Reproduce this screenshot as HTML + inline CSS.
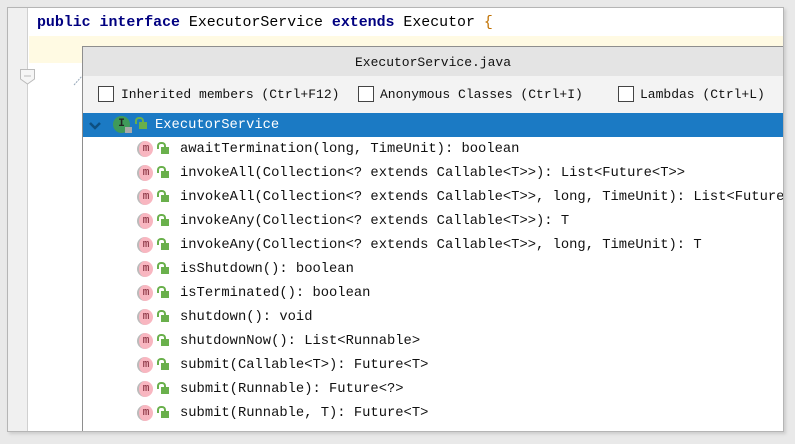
<!DOCTYPE html>
<html><head><style>
*{margin:0;padding:0;box-sizing:border-box}
body{width:795px;height:444px;background:#e9e9e9;position:relative;overflow:hidden;font-family:"Liberation Mono",monospace}
#frame{position:absolute;left:7px;top:7px;width:777px;height:425px;border:1px solid #b5b5b5;background:#fff;overflow:hidden;box-shadow:2px 2px 3px #ccc}
#gut{position:absolute;left:0;top:0;width:20px;height:100%;background:#f0f0f0;border-right:1px solid #d0d0d0}
#code{position:absolute;left:29px;top:5px;font-size:14.9px;line-height:20px;color:#000;white-space:pre}
.kw{color:#000080;font-weight:bold}
#hl{position:absolute;left:21px;top:28px;right:0;height:27px;background:#fffae3}
#pop{position:absolute;left:74px;top:38px;right:0;bottom:0;border-left:1px solid #8e8e8e;border-top:1px solid #8e8e8e;background:#fff}
#title{height:29px;background:#e4e4e4;text-align:center;font-size:13px;line-height:31px;color:#111}
#opts{height:37px;background:#f3f3f3;position:relative;font-size:13px;color:#111}
.cb{position:absolute;top:10px;width:16px;height:16px;border:1px solid #444;background:#fff}
.ol{position:absolute;top:11px;line-height:16px;white-space:pre}
#sel{height:24px;background:#1b7ac4;position:relative;color:#fff;font-size:13.8px;line-height:24px}
.row{height:24px;position:relative;font-size:13.8px;line-height:24px;white-space:pre;color:#111}
.m{position:absolute;left:54px;top:4px;width:16px;height:16px;border-radius:50%;background:#f8b6c0;color:#7a2030;font-size:11px;line-height:16px;text-align:center;border-left:2px solid #bbb}
.lk{position:absolute;left:78px;top:10px;width:8px;height:7px;background:#6ab04c}
.lk:before{content:"";position:absolute;left:-4px;top:-5px;width:5px;height:5px;border:2px solid #6ab04c;border-bottom:none;border-radius:4px 4px 0 0}
.t{position:absolute;left:97px;top:1px}
</style></head><body>
<div id="frame">
<div id="gut"></div>
<div id="hl"></div>
<div id="code"><span class="kw">public interface</span> ExecutorService <span class="kw">extends</span> Executor <span style="color:#c07000">{</span></div>
<svg style="position:absolute;left:12px;top:61px" width="15" height="16"><path d="M0.5 0.5H14.5V10L7.5 15L0.5 10Z" fill="#f5f5f5" stroke="#bbb"/><path d="M4 7H11" stroke="#bbb"/></svg>
<svg style="position:absolute;left:65px;top:66px" width="10" height="12"><path d="M1 11L9 2" stroke="#9ab" stroke-dasharray="2,1"/></svg>
<div id="pop">
<div id="title">ExecutorService.java</div>
<div id="opts">
<div class="cb" style="left:15px"></div><div class="ol" style="left:38px">Inherited members (Ctrl+F12)</div>
<div class="cb" style="left:275px"></div><div class="ol" style="left:297px">Anonymous Classes (Ctrl+I)</div>
<div class="cb" style="left:535px"></div><div class="ol" style="left:557px">Lambdas (Ctrl+L)</div>
</div>
<div id="sel"><svg style="position:absolute;left:6px;top:9px" width="12" height="8"><path d="M1 1L6 6L11 1" stroke="#0d4f80" stroke-width="2.5" fill="none"/></svg><div style="position:absolute;left:30px;top:3px;width:17px;height:17px;border-radius:50%;background:#3f9a5a;color:#222;font-size:11px;line-height:17px;text-align:center;font-weight:bold">I</div><div style="position:absolute;left:42px;top:14px;width:7px;height:6px;background:#aaa"></div><div class="lk" style="left:56px;top:9px"></div><span class="t" style="left:72px">ExecutorService</span></div>
<div class="row"><div class="m">m</div><div class="lk"></div><span class="t">awaitTermination(long, TimeUnit): boolean</span></div>
<div class="row"><div class="m">m</div><div class="lk"></div><span class="t">invokeAll(Collection&lt;? extends Callable&lt;T&gt;&gt;): List&lt;Future&lt;T&gt;&gt;</span></div>
<div class="row"><div class="m">m</div><div class="lk"></div><span class="t">invokeAll(Collection&lt;? extends Callable&lt;T&gt;&gt;, long, TimeUnit): List&lt;Future&lt;T&gt;&gt;</span></div>
<div class="row"><div class="m">m</div><div class="lk"></div><span class="t">invokeAny(Collection&lt;? extends Callable&lt;T&gt;&gt;): T</span></div>
<div class="row"><div class="m">m</div><div class="lk"></div><span class="t">invokeAny(Collection&lt;? extends Callable&lt;T&gt;&gt;, long, TimeUnit): T</span></div>
<div class="row"><div class="m">m</div><div class="lk"></div><span class="t">isShutdown(): boolean</span></div>
<div class="row"><div class="m">m</div><div class="lk"></div><span class="t">isTerminated(): boolean</span></div>
<div class="row"><div class="m">m</div><div class="lk"></div><span class="t">shutdown(): void</span></div>
<div class="row"><div class="m">m</div><div class="lk"></div><span class="t">shutdownNow(): List&lt;Runnable&gt;</span></div>
<div class="row"><div class="m">m</div><div class="lk"></div><span class="t">submit(Callable&lt;T&gt;): Future&lt;T&gt;</span></div>
<div class="row"><div class="m">m</div><div class="lk"></div><span class="t">submit(Runnable): Future&lt;?&gt;</span></div>
<div class="row"><div class="m">m</div><div class="lk"></div><span class="t">submit(Runnable, T): Future&lt;T&gt;</span></div>
</div>
</div>
</body></html>
